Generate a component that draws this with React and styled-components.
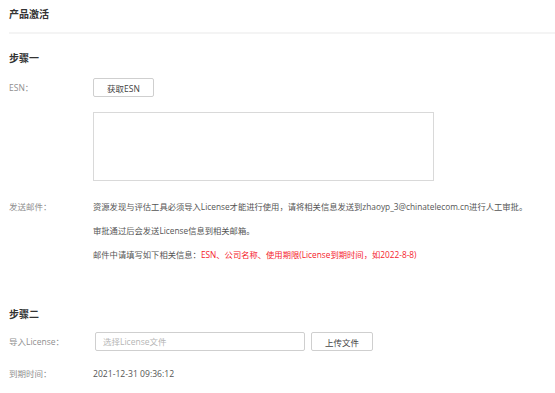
import React from "react";
import styled, { createGlobalStyle } from "styled-components";

const GlobalStyle = createGlobalStyle`
  html, body {
    margin: 0;
    padding: 0;
    background: #fff;
  }
  body {
    font-family: "Open Sans", "Noto Sans CJK SC", sans-serif;
    color: #555;
  }
`;

// STYLES

const Page = styled.div`
  width: 555px;
  height: 393px;
  overflow: hidden;
  padding-left: 9px;
  box-sizing: border-box;
`;

const Header = styled.div`
  height: 34px;
  box-sizing: border-box;
  padding-top: 7px;
  border-bottom: 2px solid #f4f4f4;
  font-size: 10px;
  line-height: 14px;
  font-weight: 700;
  color: #333;
`;

const StepTitle = styled.div`
  margin-top: ${(props) => props.top};
  font-size: 10px;
  line-height: 14px;
  font-weight: 700;
  color: #333;
`;

const Row = styled.div`
  display: flex;
  align-items: ${(props) => props.align || "center"};
  margin-top: ${(props) => props.top};
`;

const Label = styled.div`
  width: ${(props) => props.width || "84px"};
  flex: none;
  font-size: 8.5px;
  line-height: ${(props) => props.lh || "14px"};
  color: #8f8f8f;
`;

const Button = styled.button`
  height: 19px;
  width: ${(props) => props.width};
  margin-left: ${(props) => props.gap || "0"};
  padding: 0;
  border: 1px solid #cfcfcf;
  border-radius: 2px;
  background: #fff;
  font-family: inherit;
  font-size: 8.5px;
  color: #444;
  box-sizing: border-box;
`;

const TextArea = styled.div`
  width: 341px;
  height: 69px;
  margin-left: 84px;
  margin-top: 15px;
  border: 1px solid #d9d9d9;
  box-sizing: border-box;
`;

const Lines = styled.div`
  display: flex;
  flex-direction: column;
  font-size: 8.3px;
  line-height: 24px;
  color: #555;
  white-space: nowrap;
`;

const Red = styled.span`
  color: #f5222d;
`;

const Input = styled.div`
  width: 210px;
  height: 19px;
  border: 1px solid #cfcfcf;
  border-radius: 2px;
  box-sizing: border-box;
  padding-left: 7px;
  font-size: 8.5px;
  line-height: 17px;
  color: #b5b5b5;
`;

const Value = styled.div`
  font-size: 8.6px;
  line-height: 14px;
  color: #555;
`;

const App = () => {
  return (
    <Page>
      <GlobalStyle />
      <Header>产品激活</Header>

      <StepTitle top="17px">步骤一</StepTitle>
      <Row top="13px">
        <Label>ESN：</Label>
        <Button width="61px">获取ESN</Button>
      </Row>
      <TextArea />
      <Row top="14px" align="flex-start">
        <Label lh="24px">发送邮件：</Label>
        <Lines>
          <span>
            资源发现与评估工具必须导入License才能进行使用，请将相关信息发送到zhaoyp_3@chinatelecom.cn进行人工审批。
          </span>
          <span>审批通过后会发送License信息到相关邮箱。</span>
          <span>
            邮件中请填写如下相关信息：
            <Red>ESN、公司名称、使用期限(License到期时间，如2022-8-8)</Red>
          </span>
        </Lines>
      </Row>

      <StepTitle top="40px">步骤二</StepTitle>
      <Row top="11px">
        <Label width="86px">导入License：</Label>
        <Input>选择License文件</Input>
        <Button width="62px" gap="6px">
          上传文件
        </Button>
      </Row>
      <Row top="16px">
        <Label>到期时间：</Label>
        <Value>2021-12-31 09:36:12</Value>
      </Row>
    </Page>
  );
};

export default App;
